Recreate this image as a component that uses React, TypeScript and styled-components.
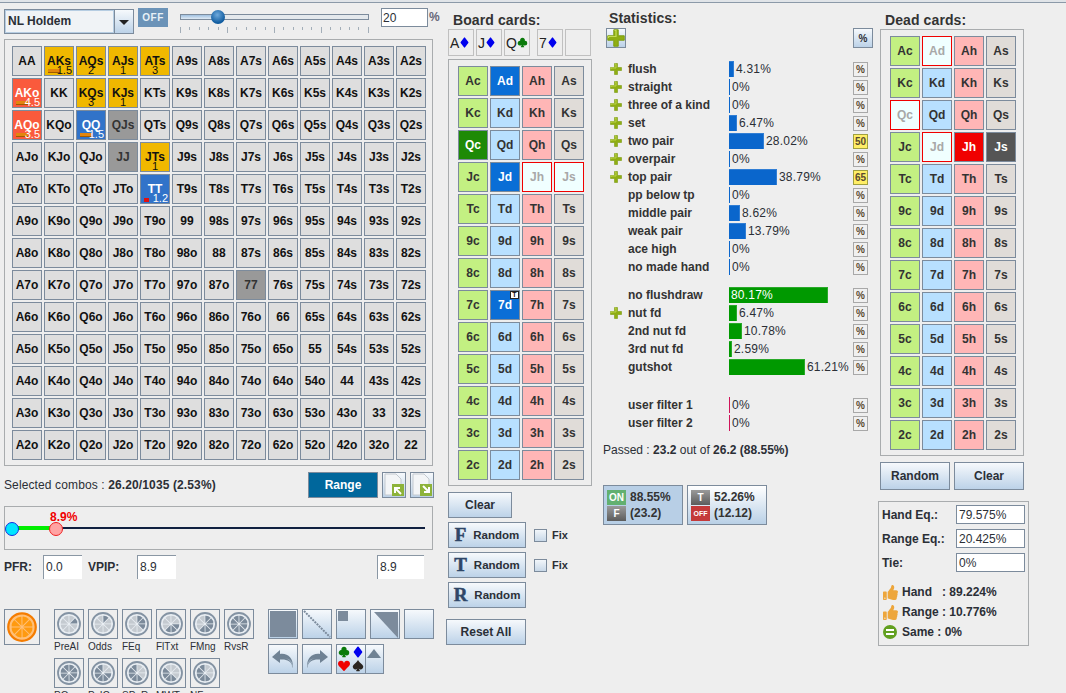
import React from "react"
import styled, { createGlobalStyle, css } from "styled-components"
import { FaThumbsUp } from "react-icons/fa"
import { BsSuitClubFill, BsSuitDiamondFill, BsSuitHeartFill, BsSuitSpadeFill } from "react-icons/bs"

const FONT = `"Liberation Sans", Arial, sans-serif`
const EDGE = "#7c8b9c"
const PANEL = "#a9acae"
const INK = "#2b2f36"
const GLOSS = "linear-gradient(#f6f9fc, #bcd2e8)"

const GlobalStyle = createGlobalStyle`
  html, body {
    margin: 0;
    height: 693px;
    overflow: hidden;
    background: #eeeeee;
    font-family: ${FONT};
    font-size: 12px;
    color: ${INK};
  }
`

/* ---------- hand matrix data ---------- */
const RANKS = "AKQJT98765432".split("")

type HandMark = { tone: "yellow" | "red" | "blue" | "gray"; note?: string; bar?: boolean; flag?: boolean }
const MARKS: Record<string, HandMark> = {
  AKs: { tone: "yellow", note: "1.5", bar: true },
  AQs: { tone: "yellow", note: "2" },
  AJs: { tone: "yellow", note: "1" },
  ATs: { tone: "yellow", note: "3" },
  KQs: { tone: "yellow", note: "3" },
  KJs: { tone: "yellow", note: "1" },
  JTs: { tone: "yellow", note: "1" },
  AKo: { tone: "red", note: "4.5", bar: true },
  AQo: { tone: "red", note: "3.5", bar: true },
  QQ: { tone: "blue", note: "1.5", bar: true },
  TT: { tone: "blue", note: "1.2", flag: true },
  QJs: { tone: "gray" },
  JJ: { tone: "gray" },
  "77": { tone: "gray" },
}

const handName = (row: number, col: number) => {
  if (row === col) return RANKS[row] + RANKS[col]
  return row < col ? RANKS[row] + RANKS[col] + "s" : RANKS[col] + RANKS[row] + "o"
}

const HandGrid = () => (
  <Matrix>
    {RANKS.flatMap((_, row) =>
      RANKS.map((_, col) => {
        const name = handName(row, col)
        const mark = MARKS[name]
        return (
          <HandCell key={name} $tone={mark?.tone}>
            {name}
            {mark?.bar && <HandBar />}
            {mark?.flag && <HandFlag />}
            {mark?.note && <HandNote $centered={!mark.bar && !mark.flag}>{mark.note}</HandNote>}
          </HandCell>
        )
      }),
    )}
  </Matrix>
)

/* ---------- card pickers ---------- */
const SUITS = "cdhs".split("")
type CardState = "on" | "crossed" | "hot" | "dark"

const CardGrid = ({ states, tagged }: { states: Record<string, CardState>; tagged?: string }) => (
  <CardPanel>
    {RANKS.flatMap((rank) =>
      SUITS.map((suit) => {
        const name = rank + suit
        return (
          <Card key={name} $suit={suit} $state={states[name]}>
            {name}
            {tagged === name && <CardTag>T</CardTag>}
          </Card>
        )
      }),
    )}
  </CardPanel>
)

/* ---------- drawn icons ---------- */
const PlusIcon = ({ size = 12 }: { size?: number }) => (
  <svg width={size} height={size} viewBox="0 0 12 12">
    <path d="M4.5 0.5h3v4h4v3h-4v4h-3v-4h-4v-3h4z" fill="#8fae12" stroke="#7b9a10" strokeWidth="0.6" />
    <path d="M5 1h1v4H1v1" fill="none" stroke="#c5dc55" strokeWidth="0.8" />
  </svg>
)

const Wheel = ({ dark, hot }: { dark: number[]; hot?: boolean }) => {
  const petal = (on: boolean) => {
    if (hot) return "#ff9a10"
    return on ? "#7b8a9a" : "#c4cad0"
  }
  const size = hot ? 30 : 24
  return (
    <svg width={size} height={size} viewBox="0 0 24 24">
      <circle cx="12" cy="12" r="11" fill={hot ? "#ffc07a" : "#e9eef3"} stroke={hot ? "#f57c00" : "#8493a3"} strokeWidth="1.8" />
      {[0, 45, 90, 135, 180, 225, 270, 315].map((angle, i) => (
        <path
          key={angle}
          d="M12 11 L9.200 4.200 Q12 2.800 14.800 4.200 Z"
          transform={`rotate(${angle + 22} 12 12)`}
          fill={petal(dark.includes(i))}
        />
      ))}
    </svg>
  )
}

const DocIcon = ({ flip }: { flip?: boolean }) => (
  <svg width="22" height="24" viewBox="0 0 22 24">
    <path d="M2 1h11l5 5v16H2z" fill="#f3f5f7" stroke="#c3c9cf" />
    <rect x="9" y="11" width="12" height="12" fill="#8db33a" />
    <path
      d={flip ? "M12 13l6 6M18 14v5h-5" : "M18 21l-6-6M12 20v-5h5"}
      stroke="#fff"
      strokeWidth="2"
      fill="none"
    />
  </svg>
)

const TurnArrow = ({ mirror }: { mirror?: boolean }) => (
  <svg width="24" height="24" viewBox="0 0 24 24" style={mirror ? { transform: "scaleX(-1)" } : undefined}>
    <path d="M1 10 L9 3 V7 C17 6 22 11 22 20 C20 14 16 12 9 12.500 V16 Z" fill="#6f8294" />
    <path d="M21 21 C21.500 15 18 12 14 11.500 C18 11 22 14 22 20 Z" fill="#9fb0c0" />
  </svg>
)

const SHAPES = [
  <ShapeFull key="full" />,
  <svg key="diag" width="28" height="28" viewBox="0 0 28 28">
    <path d="M1 1 L27 27" stroke="#7c8b9c" strokeWidth="2" strokeDasharray="2 1" />
  </svg>,
  <ShapeCorner key="corner" />,
  <svg key="tri" width="28" height="28" viewBox="0 0 28 28">
    <path d="M3 2H27V28Z" fill="#7c8b9c" />
  </svg>,
  <span key="none" />,
]

function ShapeFull() {
  return <FullBlock />
}
function ShapeCorner() {
  return <CornerBlock />
}

/* ---------- stats data ---------- */
type Stat = { label: string; pct: number; plus?: boolean; tone?: "blue" | "green" | "pink"; badge?: string; gap?: number }
const STATS: Stat[] = [
  { label: "flush", pct: 4.31, plus: true },
  { label: "straight", pct: 0, plus: true },
  { label: "three of a kind", pct: 0, plus: true },
  { label: "set", pct: 6.47, plus: true },
  { label: "two pair", pct: 28.02, plus: true, badge: "50" },
  { label: "overpair", pct: 0, plus: true },
  { label: "top pair", pct: 38.79, plus: true, badge: "65" },
  { label: "pp below tp", pct: 0 },
  { label: "middle pair", pct: 8.62 },
  { label: "weak pair", pct: 13.79 },
  { label: "ace high", pct: 0 },
  { label: "no made hand", pct: 0 },
  { label: "no flushdraw", pct: 80.17, tone: "green", gap: 10 },
  { label: "nut fd", pct: 6.47, plus: true, tone: "green" },
  { label: "2nd nut fd", pct: 10.78, tone: "green" },
  { label: "3rd nut fd", pct: 2.59, tone: "green" },
  { label: "gutshot", pct: 61.21, tone: "green" },
  { label: "user filter 1", pct: 0, tone: "pink", gap: 20 },
  { label: "user filter 2", pct: 0, tone: "pink" },
]

const WHEELS = [
  { label: "PreAI", dark: [1] },
  { label: "Odds", dark: [0] },
  { label: "FEq", dark: [0, 1, 2] },
  { label: "FlTxt", dark: [2, 3, 4] },
  { label: "FMng", dark: [0, 1, 2, 3, 4] },
  { label: "RvsR", dark: [0, 1, 2, 3, 4, 5, 6, 7] },
  { label: "PQ", dark: [0, 1, 2, 3, 4, 5, 6, 7] },
  { label: "PvIC", dark: [2, 3, 4, 5, 6, 7] },
  { label: "SPeR", dark: [3, 4, 5, 6, 7] },
  { label: "MWT", dark: [3, 4, 5, 6] },
  { label: "NF", dark: [3, 4, 5, 6, 7] },
]

export default function App() {
  return (
    <>
      <GlobalStyle />
      <TopRule />
      <Page>
        <LeftColumn>
          <TopBar>
            <GameSelect>
              <GameName>NL Holdem</GameName>
              <GameArrow />
            </GameSelect>
            <OffButton>OFF</OffButton>
            <PercentSlider>
              <SliderTrack>
                <SliderFill />
                <SliderKnob />
              </SliderTrack>
              <Ticks>
                {Array.from({ length: 21 }, (_, i) => (
                  <Tick key={i} $major={i % 5 === 0} />
                ))}
              </Ticks>
            </PercentSlider>
            <PercentInput>20</PercentInput>
            <PercentSign>%</PercentSign>
          </TopBar>

          <HandGrid />

          <SelectedRow>
            <SelectedText>
              Selected combos : <b>26.20/1035 (2.53%)</b>
            </SelectedText>
            <RangeButton>Range</RangeButton>
            <DocButton>
              <DocIcon />
            </DocButton>
            <DocButton>
              <DocIcon flip />
            </DocButton>
          </SelectedRow>

          <RangePanel>
            <RangeLabel>8.9%</RangeLabel>
            <RangeLine />
            <RangeGreen />
            <RangeKnob $left={0} $color="#00e5ff" $edge="#1030e0" />
            <RangeKnob $left={44} $color="#ffa3a3" $edge="#ee2020" />
          </RangePanel>

          <PfrRow>
            <PfrLabel $width={39}>PFR:</PfrLabel>
            <NumberBox $width={39}>0.0</NumberBox>
            <PfrLabel $width={49} $indent={6}>
              VPIP:
            </PfrLabel>
            <NumberBox $width={39}>8.9</NumberBox>
            <NumberBox $width={47} $push={201}>
              8.9
            </NumberBox>
          </PfrRow>

          <BottomTools>
            <OrangeButton>
              <Wheel dark={[]} hot />
            </OrangeButton>
            <WheelGrid>
              {WHEELS.map((w) => (
                <WheelItem key={w.label}>
                  <WheelButton>
                    <Wheel dark={w.dark} />
                  </WheelButton>
                  <WheelLabel>{w.label}</WheelLabel>
                </WheelItem>
              ))}
            </WheelGrid>
            <ShapeArea>
              <ShapeRow>
                {SHAPES.map((shape, i) => (
                  <SquareButton key={i}>{shape}</SquareButton>
                ))}
              </ShapeRow>
              <ShapeRow>
                <SquareButton>
                  <TurnArrow />
                </SquareButton>
                <SquareButton>
                  <TurnArrow mirror />
                </SquareButton>
                <SuitSplit>
                  <SuitButton>
                    <BsSuitClubFill size={12} color="#0a7a0a" />
                    <BsSuitDiamondFill size={12} color="#0000ee" />
                    <BsSuitHeartFill size={12} color="#f00000" />
                    <BsSuitSpadeFill size={12} color="#2a2420" />
                  </SuitButton>
                  <UpButton>
                    <UpArrow />
                  </UpButton>
                </SuitSplit>
              </ShapeRow>
            </ShapeArea>
          </BottomTools>
        </LeftColumn>

        <BoardColumn>
          <BoardTitle>Board cards:</BoardTitle>
          <BoardSlots>
            <Slot>
              A<BsSuitDiamondFill size={11} color="#0000ee" />
            </Slot>
            <Slot>
              J<BsSuitDiamondFill size={11} color="#0000ee" />
            </Slot>
            <Slot>
              Q<BsSuitClubFill size={11} color="#0a7a0a" />
            </Slot>
            <Slot $apart>
              7<BsSuitDiamondFill size={11} color="#0000ee" />
            </Slot>
            <Slot />
          </BoardSlots>
          <CardGrid
            tagged="7d"
            states={{ Ad: "on", Qc: "on", Jd: "on", "7d": "on", Jh: "crossed", Js: "crossed" }}
          />
          <BoardActions>
            <ClearButton>Clear</ClearButton>
            <RandomLine>
              <RandomButton>
                <SlabLetter>F</SlabLetter>Random
              </RandomButton>
              <FixBox />
              <span>Fix</span>
            </RandomLine>
            <RandomLine>
              <RandomButton>
                <SlabLetter>T</SlabLetter>Random
              </RandomButton>
              <FixBox />
              <span>Fix</span>
            </RandomLine>
            <RandomLine>
              <RandomButton>
                <SlabLetter>R</SlabLetter>Random
              </RandomButton>
            </RandomLine>
            <ResetButton>Reset All</ResetButton>
          </BoardActions>
        </BoardColumn>

        <StatsColumn>
          <StatsTitle>Statistics:</StatsTitle>
          <StatsHeader>
            <HeaderButton>
              <PlusIcon size={18} />
            </HeaderButton>
            <HeaderButton>%</HeaderButton>
          </StatsHeader>
          <StatRows>
            {STATS.map((s) => {
              const inside = s.pct > 70
              return (
                <StatRow key={s.label} $gap={s.gap}>
                  <PlusSlot>{s.plus && <PlusIcon />}</PlusSlot>
                  <StatLabel>{s.label}</StatLabel>
                  <BarArea>
                    <Bar $tone={s.tone ?? "blue"} $empty={s.pct === 0} style={{ width: Math.max(1, Math.round(s.pct * 1.24)) }} />
                    <BarText $inside={inside}>{s.pct}%</BarText>
                  </BarArea>
                  <PctBox $badge={!!s.badge}>{s.badge ?? "%"}</PctBox>
                </StatRow>
              )
            })}
          </StatRows>
          <Passed>
            Passed : <b>23.2</b> out of <b>26.2 (88.55%)</b>
          </Passed>
          <Toggles>
            <Toggle $active>
              <ToggleFlags>
                <Flag $tone="green">ON</Flag>
                <Flag $tone="gray">F</Flag>
              </ToggleFlags>
              <ToggleText>
                <span>88.55%</span>
                <span>(23.2)</span>
              </ToggleText>
            </Toggle>
            <Toggle>
              <ToggleFlags>
                <Flag $tone="gray">T</Flag>
                <Flag $tone="red">OFF</Flag>
              </ToggleFlags>
              <ToggleText>
                <span>52.26%</span>
                <span>(12.12)</span>
              </ToggleText>
            </Toggle>
          </Toggles>
        </StatsColumn>

        <DeadColumn>
          <DeadTitle>Dead cards:</DeadTitle>
          <DeadCards>
            <CardGrid states={{ Ad: "crossed", Qc: "crossed", Jd: "crossed", Jh: "hot", Js: "dark" }} />
            <DeadButtons>
              <WideButton>Random</WideButton>
              <WideButton>Clear</WideButton>
            </DeadButtons>
          </DeadCards>
          <EquityPanel>
            <EqRow>
              <b>Hand Eq.:</b>
              <EqField>79.575%</EqField>
            </EqRow>
            <EqRow>
              <b>Range Eq.:</b>
              <EqField>20.425%</EqField>
            </EqRow>
            <EqRow>
              <b>Tie:</b>
              <EqField>0%</EqField>
            </EqRow>
            <Verdicts>
              <Verdict>
                <ThumbSlot>
                  <FaThumbsUp size={15} color="#eda63c" />
                </ThumbSlot>
                Hand&nbsp;&nbsp; : 89.224%
              </Verdict>
              <Verdict>
                <ThumbSlot>
                  <FaThumbsUp size={15} color="#eda63c" />
                </ThumbSlot>
                Range : 10.776%
              </Verdict>
              <Verdict>
                <ThumbSlot>
                  <SameDot />
                </ThumbSlot>
                Same : 0%
              </Verdict>
            </Verdicts>
          </EquityPanel>
        </DeadColumn>
      </Page>
    </>
  )
}

/* ---------- page ---------- */
const TopRule = styled.div`
  height: 2px;
  background: #e0e4e8;
  border-bottom: 1px solid #8b99a8;
`

const Page = styled.div`
  display: flex;
  align-items: flex-start;
  padding-left: 4px;
`

const LeftColumn = styled.div`
  flex: none;
  width: 430px;
  margin-right: 14px;
  padding-top: 5px;
`

const TopBar = styled.div`
  display: flex;
  align-items: flex-start;
  height: 26px;
  margin-bottom: 5px;
  & > * {
    flex: none;
  }
`

const GameSelect = styled.div`
  display: flex;
  width: 130px;
  height: 25px;
  box-sizing: border-box;
  border: 1px solid ${EDGE};
  margin-top: 1px;
`

const GameName = styled.div`
  flex: 1;
  border: 1px solid #b6cde2;
  background: #f0f3f6;
  font-weight: 700;
  font-size: 12px;
  line-height: 21px;
  padding-left: 2px;
  white-space: nowrap;
`

const GameArrow = styled.div`
  width: 18px;
  background: ${GLOSS};
  border-left: 1px solid ${EDGE};
  position: relative;
  &::after {
    content: "";
    position: absolute;
    left: 4px;
    top: 10px;
    border: 5px solid transparent;
    border-top: 5px solid #222;
    border-bottom: 0;
  }
`

const OffButton = styled.div`
  width: 30px;
  height: 19px;
  margin-left: 4px;
  background: #6b93b8;
  color: #e8f0f6;
  font-size: 10px;
  font-weight: 700;
  letter-spacing: 0.5px;
  line-height: 19px;
  text-align: center;
`

const PercentSlider = styled.div`
  width: 189px;
  margin-left: 12px;
  margin-top: 3px;
`

const SliderTrack = styled.div`
  position: relative;
  height: 6px;
  margin-top: 3px;
  border: 1px solid ${EDGE};
  box-sizing: border-box;
  background: #e4e8ec;
`

const SliderFill = styled.div`
  width: 36px;
  height: 100%;
  background: linear-gradient(#9fc0e0, #dfeaf4);
`

const SliderKnob = styled.div`
  position: absolute;
  left: 30px;
  top: -5px;
  width: 14px;
  height: 14px;
  border-radius: 50%;
  background: radial-gradient(circle at 45% 35%, #6ea9dc, #0d5a9e 70%);
`

const Ticks = styled.div`
  display: flex;
  justify-content: space-between;
  align-items: flex-start;
  height: 8px;
  margin-top: 7px;
`

const Tick = styled.span<{ $major: boolean }>`
  width: 1px;
  height: ${(p) => (p.$major ? 6 : 3)}px;
  background: #a3aeb8;
`

const PercentInput = styled.div`
  width: 47px;
  height: 19px;
  box-sizing: border-box;
  margin-left: 12px;
  border: 1px solid ${EDGE};
  background: #fff;
  font-size: 12px;
  line-height: 18px;
  padding-left: 1px;
`

const PercentSign = styled.span`
  font-size: 12px;
  font-weight: 700;
  color: #667;
  margin-left: 1px;
  margin-top: 2px;
`

/* ---------- hand matrix ---------- */
const Matrix = styled.div`
  box-sizing: border-box;
  width: 429px;
  height: 427px;
  border: 1px solid ${PANEL};
  padding: 6px 7px;
  display: grid;
  grid-template-columns: repeat(13, 30px);
  grid-auto-rows: 30px;
  gap: 2px;
`

const toneStyles = {
  yellow: css`
    background: #f0b800;
    color: #111;
  `,
  red: css`
    background: #fa5a3c;
    color: #fff;
  `,
  blue: css`
    background: #3173c9;
    color: #fff;
  `,
  gray: css`
    background: #999999;
    color: #333;
  `,
}

const HandCell = styled.div<{ $tone?: keyof typeof toneStyles }>`
  position: relative;
  box-sizing: border-box;
  border: 1px solid ${EDGE};
  background: #dedede;
  color: #111;
  font-weight: 700;
  font-size: 12px;
  line-height: 28px;
  text-align: center;
  ${(p) => p.$tone && toneStyles[p.$tone]}
`

const HandNote = styled.span<{ $centered: boolean }>`
  position: absolute;
  bottom: -1px;
  font-size: 11px;
  font-weight: 400;
  line-height: 11px;
  ${(p) => (p.$centered ? "left: 0; right: 0; text-align: center;" : "right: 1px;")}
`

const HandBar = styled.span`
  position: absolute;
  left: 3px;
  bottom: 2px;
  width: 12px;
  height: 3px;
  background: #e2860e;
  border: 1px solid #a05a00;
  border-width: 0 0 1px 0;
`

const HandFlag = styled.span`
  position: absolute;
  left: 3px;
  bottom: 1px;
  width: 5px;
  height: 4px;
  background: #e01010;
`

/* ---------- under the matrix ---------- */
const SelectedRow = styled.div`
  display: flex;
  align-items: center;
  height: 26px;
  margin-top: 6px;
  font-size: 12px;
  & > * {
    flex: none;
  }
`

const SelectedText = styled.span`
  width: 304px;
  letter-spacing: 0.12px;
`

const RangeButton = styled.div`
  box-sizing: border-box;
  width: 70px;
  height: 26px;
  margin-right: 4px;
  background: #00679c;
  border: 1px solid ${EDGE};
  color: #fff;
  font-weight: 700;
  line-height: 24px;
  text-align: center;
`

const DocButton = styled.div`
  box-sizing: border-box;
  display: flex;
  align-items: center;
  justify-content: center;
  width: 24px;
  height: 26px;
  margin-right: 4px;
  background: ${GLOSS};
  border: 1px solid ${EDGE};
`

const RangePanel = styled.div`
  position: relative;
  box-sizing: border-box;
  width: 429px;
  height: 44px;
  margin-top: 8px;
  border: 1px solid ${PANEL};
`

const RangeLabel = styled.span`
  position: absolute;
  left: 45px;
  top: 3px;
  color: #f00000;
  font-weight: 700;
  font-size: 12px;
`

const RangeLine = styled.div`
  position: absolute;
  left: 7px;
  right: 7px;
  top: 20px;
  height: 2px;
  background: #102040;
`

const RangeGreen = styled.div`
  position: absolute;
  left: 7px;
  top: 19px;
  width: 45px;
  height: 4px;
  background: #00ee00;
`

const RangeKnob = styled.div<{ $left: number; $color: string; $edge: string }>`
  position: absolute;
  left: ${(p) => p.$left}px;
  top: 15px;
  width: 12px;
  height: 12px;
  border-radius: 50%;
  background: ${(p) => p.$color};
  border: 1px solid ${(p) => p.$edge};
`

const PfrRow = styled.div`
  display: flex;
  align-items: center;
  height: 24px;
  margin-top: 5px;
`

const PfrLabel = styled.b<{ $width: number; $indent?: number }>`
  width: ${(p) => p.$width}px;
  margin-left: ${(p) => p.$indent ?? 0}px;
  font-size: 12px;
`

const NumberBox = styled.div<{ $width: number; $push?: number }>`
  box-sizing: border-box;
  width: ${(p) => p.$width}px;
  height: 24px;
  margin-left: ${(p) => p.$push ?? 0}px;
  background: #fff;
  border-top: 1px solid #8a97a4;
  border-left: 1px solid #8a97a4;
  font-size: 12px;
  line-height: 22px;
  padding-left: 2px;
`

const BottomTools = styled.div`
  display: flex;
  align-items: flex-start;
  margin-top: 30px;
`

const OrangeButton = styled.div`
  box-sizing: border-box;
  display: flex;
  align-items: center;
  justify-content: center;
  width: 36px;
  height: 36px;
  border: 1px solid ${EDGE};
  margin-right: 14px;
`

const WheelGrid = styled.div`
  display: grid;
  grid-template-columns: repeat(6, 30px);
  grid-auto-rows: 49px;
  column-gap: 4px;
  width: 200px;
  margin-right: 14px;
`

const WheelItem = styled.div`
  display: flex;
  flex-direction: column;
`

const WheelButton = styled.div`
  box-sizing: border-box;
  display: flex;
  align-items: center;
  justify-content: center;
  width: 30px;
  height: 30px;
  border: 1px solid ${EDGE};
`

const WheelLabel = styled.span`
  font-size: 10px;
  line-height: 14px;
  margin-top: 1px;
  white-space: nowrap;
`

const ShapeArea = styled.div`
  display: flex;
  flex-direction: column;
  gap: 5px;
`

const ShapeRow = styled.div`
  display: flex;
  gap: 4px;
`

const SquareButton = styled.div`
  box-sizing: border-box;
  display: flex;
  align-items: center;
  justify-content: center;
  width: 30px;
  height: 30px;
  background: ${GLOSS};
  border: 1px solid ${EDGE};
`

const FullBlock = styled.div`
  width: 26px;
  height: 26px;
  background: #7c8b9c;
`

const CornerBlock = styled.div`
  align-self: flex-start;
  margin: 1px auto 0 1px;
  width: 10px;
  height: 10px;
  background: #7c8b9c;
`

const SuitSplit = styled.div`
  display: flex;
`

const SuitButton = styled.div`
  box-sizing: border-box;
  display: grid;
  grid-template-columns: 14px 14px;
  justify-items: center;
  align-items: center;
  width: 30px;
  height: 30px;
  background: ${GLOSS};
  border: 1px solid ${EDGE};
`

const UpButton = styled.div`
  box-sizing: border-box;
  width: 18px;
  height: 30px;
  padding: 4px 1px;
  background: ${GLOSS};
  border: 1px solid ${EDGE};
  border-left: 0;
`

const UpArrow = styled.div`
  width: 0;
  height: 0;
  border: 7px solid transparent;
  border-bottom: 9px solid #6f8294;
  border-top: 0;
`

/* ---------- board column ---------- */
const BoardColumn = styled.div`
  flex: none;
  width: 146px;
  margin-right: 9px;
`

const ColumnTitle = styled.div`
  font-weight: 700;
  font-size: 14px;
  letter-spacing: 0.1px;
  line-height: 16px;
  color: #333;
`

const BoardTitle = styled(ColumnTitle)`
  margin: 9px 0 1px 5px;
`

const BoardSlots = styled.div`
  display: flex;
  gap: 2px;
  height: 27px;
  margin-bottom: 3px;
`

const Slot = styled.div<{ $apart?: boolean }>`
  box-sizing: border-box;
  display: flex;
  align-items: center;
  width: 26px;
  height: 27px;
  margin-left: ${(p) => (p.$apart ? 5 : 0)}px;
  padding-left: 1px;
  border: 1px solid #c0c0c0;
  font-size: 14px;
  color: #222;
  gap: 0;
`

const CardPanel = styled.div`
  box-sizing: border-box;
  width: 144px;
  padding: 6px 9px 5px;
  border: 1px solid ${PANEL};
  display: grid;
  grid-template-columns: repeat(4, 30px);
  grid-auto-rows: 30px;
  gap: 2px;
`

const suitColors: Record<string, string> = {
  c: "#c3f082",
  d: "#b8e0ff",
  h: "#ffb6b6",
  s: "#e0dcd8",
}

const cardStates = {
  on: css<{ $suit: string }>`
    background: ${(p) => (p.$suit === "c" ? "#1e8a06" : "#0a6ed6")};
    color: #fff;
  `,
  crossed: css`
    background: #f0ffff;
    border-color: #f00000;
    color: #a8a8a8;
  `,
  hot: css`
    background: #f00000;
    color: #fff;
  `,
  dark: css`
    background: #555555;
    color: #fff;
  `,
}

const Card = styled.div<{ $suit: string; $state?: CardState }>`
  position: relative;
  box-sizing: border-box;
  border: 1px solid ${EDGE};
  background: ${(p) => suitColors[p.$suit]};
  color: #333;
  font-weight: 700;
  font-size: 12px;
  line-height: 28px;
  text-align: center;
  ${(p) => p.$state && cardStates[p.$state]}
`

const CardTag = styled.span`
  position: absolute;
  top: 0;
  right: 0;
  width: 9px;
  height: 8px;
  background: #fff;
  color: #111;
  border: 1px solid #222;
  box-sizing: border-box;
  font-size: 7px;
  line-height: 6px;
`

const BoardActions = styled.div`
  display: flex;
  flex-direction: column;
  align-items: flex-start;
  gap: 4px;
  margin-top: 6px;
`

const PlainButton = styled.div`
  box-sizing: border-box;
  display: flex;
  align-items: center;
  justify-content: center;
  height: 26px;
  background: ${GLOSS};
  border: 1px solid ${EDGE};
  font-weight: 700;
  font-size: 12px;
  color: #2b3038;
`

const ClearButton = styled(PlainButton)`
  width: 64px;
`

const RandomLine = styled.div`
  display: flex;
  align-items: center;
  height: 26px;
  font-size: 11px;
  font-weight: 700;
`

const RandomButton = styled(PlainButton)`
  width: 78px;
  gap: 7px;
  font-size: 11.500px;
`

const SlabLetter = styled.span`
  font-family: "Liberation Serif", serif;
  font-weight: 700;
  font-size: 19px;
  color: #2f4668;
  -webkit-text-stroke: 0.5px #2f4668;
`

const FixBox = styled.div`
  box-sizing: border-box;
  width: 13px;
  height: 13px;
  margin: 0 5px 0 8px;
  background: linear-gradient(#f2f6fa, #c8d8e8);
  border: 1px solid ${EDGE};
`

const ResetButton = styled(PlainButton)`
  width: 80px;
  margin: 7px 0 0 -2px;
`

/* ---------- statistics ---------- */
const StatsColumn = styled.div`
  flex: none;
  width: 270px;
  margin-right: 5px;
`

const StatsTitle = styled(ColumnTitle)`
  margin: 7px 0 2px 6px;
`

const StatsHeader = styled.div`
  display: flex;
  justify-content: space-between;
  width: 267px;
  margin-left: 3px;
  margin-bottom: 12px;
`

const HeaderButton = styled.div`
  box-sizing: border-box;
  display: flex;
  align-items: center;
  justify-content: center;
  width: 20px;
  height: 20px;
  background: ${GLOSS};
  border: 1px solid ${EDGE};
  font-size: 10px;
  font-weight: 700;
`

const StatRows = styled.div`
  display: flex;
  flex-direction: column;
`

const StatRow = styled.div<{ $gap?: number }>`
  display: flex;
  align-items: center;
  height: 18px;
  margin-top: ${(p) => p.$gap ?? 0}px;
`

const PlusSlot = styled.div`
  display: flex;
  width: 18px;
  margin-left: 7px;
`

const StatLabel = styled.div`
  width: 101px;
  font-weight: 700;
  font-size: 12px;
  color: #333;
  white-space: nowrap;
`

const BarArea = styled.div`
  position: relative;
  display: flex;
  align-items: center;
  width: 124px;
  height: 16px;
`

const barTones = {
  blue: "#0a66cc",
  green: "#009900",
  pink: "#d0145a",
}

const Bar = styled.div<{ $tone: keyof typeof barTones; $empty: boolean }>`
  box-sizing: border-box;
  height: 16px;
  flex-shrink: 0;
  background: ${(p) => barTones[p.$tone]};
  ${(p) => !p.$empty && "border: 1px solid rgba(255, 255, 255, 0.16); border-width: 1px 1px 0 0;"}
`

const BarText = styled.span<{ $inside: boolean }>`
  font-size: 12px;
  margin-left: 2px;
  white-space: nowrap;
  letter-spacing: 0.2px;
  ${(p) => p.$inside && "position: absolute; left: 0; color: #fff;"}
`

const PctBox = styled.div<{ $badge: boolean }>`
  box-sizing: border-box;
  width: 15px;
  height: 15px;
  border: 1px solid ${(p) => (p.$badge ? "#a0a040" : "#a8a8a8")};
  background: ${(p) => (p.$badge ? "#ffee66" : "#f0f0f0")};
  font-size: 10px;
  font-weight: 700;
  line-height: 13px;
  text-align: center;
  color: #5a4a30;
`

const Passed = styled.div`
  margin-top: 9px;
  height: 18px;
  line-height: 18px;
  font-size: 12px;
`

const Toggles = styled.div`
  display: flex;
  gap: 4px;
  margin-top: 26px;
`

const Toggle = styled.div<{ $active?: boolean }>`
  box-sizing: border-box;
  display: flex;
  align-items: center;
  gap: 4px;
  width: 80px;
  height: 40px;
  padding-left: 3px;
  border: 1px solid ${EDGE};
  background: ${(p) => (p.$active ? "#b8cfe6" : "linear-gradient(#ffffff, #b9d0e6)")};
`

const ToggleFlags = styled.div`
  display: flex;
  flex-direction: column;
  gap: 1px;
`

const flagTones = {
  green: "#62b070",
  gray: "linear-gradient(#9a9a9a, #5c5c5c)",
  red: "#c43a3a",
}

const Flag = styled.div<{ $tone: keyof typeof flagTones }>`
  width: 19px;
  height: 15px;
  background: ${(p) => flagTones[p.$tone]};
  color: #fff;
  font-size: ${(p) => (p.$tone === "red" ? 7 : 10)}px;
  font-weight: 700;
  line-height: 15px;
  text-align: center;
`

const ToggleText = styled.div`
  display: flex;
  flex-direction: column;
  font-weight: 700;
  font-size: 12px;
  line-height: 16px;
  color: #333;
`

/* ---------- dead cards ---------- */
const DeadColumn = styled.div`
  flex: none;
  width: 152px;
`

const DeadTitle = styled(ColumnTitle)`
  margin: 9px 0 1px 7px;
`

const DeadCards = styled.div`
  margin-left: 2px;
`

const DeadButtons = styled.div`
  display: flex;
  gap: 4px;
  margin-top: 6px;
`

const WideButton = styled(PlainButton)`
  width: 70px;
  height: 28px;
`

const EquityPanel = styled.div`
  box-sizing: border-box;
  width: 151px;
  height: 145px;
  margin-top: 11px;
  padding: 3px 3px 0 3px;
  border: 1px solid ${PANEL};
`

const EqRow = styled.div`
  display: flex;
  align-items: center;
  justify-content: space-between;
  height: 19px;
  margin-bottom: 5px;
  font-size: 12px;
`

const EqField = styled.div`
  box-sizing: border-box;
  width: 69px;
  height: 19px;
  background: #fff;
  border: 1px solid ${EDGE};
  font-size: 12px;
  line-height: 18px;
  padding-left: 2px;
`

const Verdicts = styled.div`
  margin-top: 10px;
`

const Verdict = styled.div`
  display: flex;
  align-items: center;
  height: 20px;
  font-weight: 700;
  font-size: 12px;
`

const ThumbSlot = styled.span`
  display: flex;
  justify-content: center;
  width: 16px;
  margin-right: 4px;
`

const SameDot = styled.span`
  position: relative;
  width: 14px;
  height: 14px;
  border-radius: 50%;
  background: #62a020;
  &::after {
    content: "";
    position: absolute;
    left: 3px;
    top: 4px;
    width: 8px;
    height: 2px;
    border: solid #fff;
    border-width: 2px 0;
  }
`
